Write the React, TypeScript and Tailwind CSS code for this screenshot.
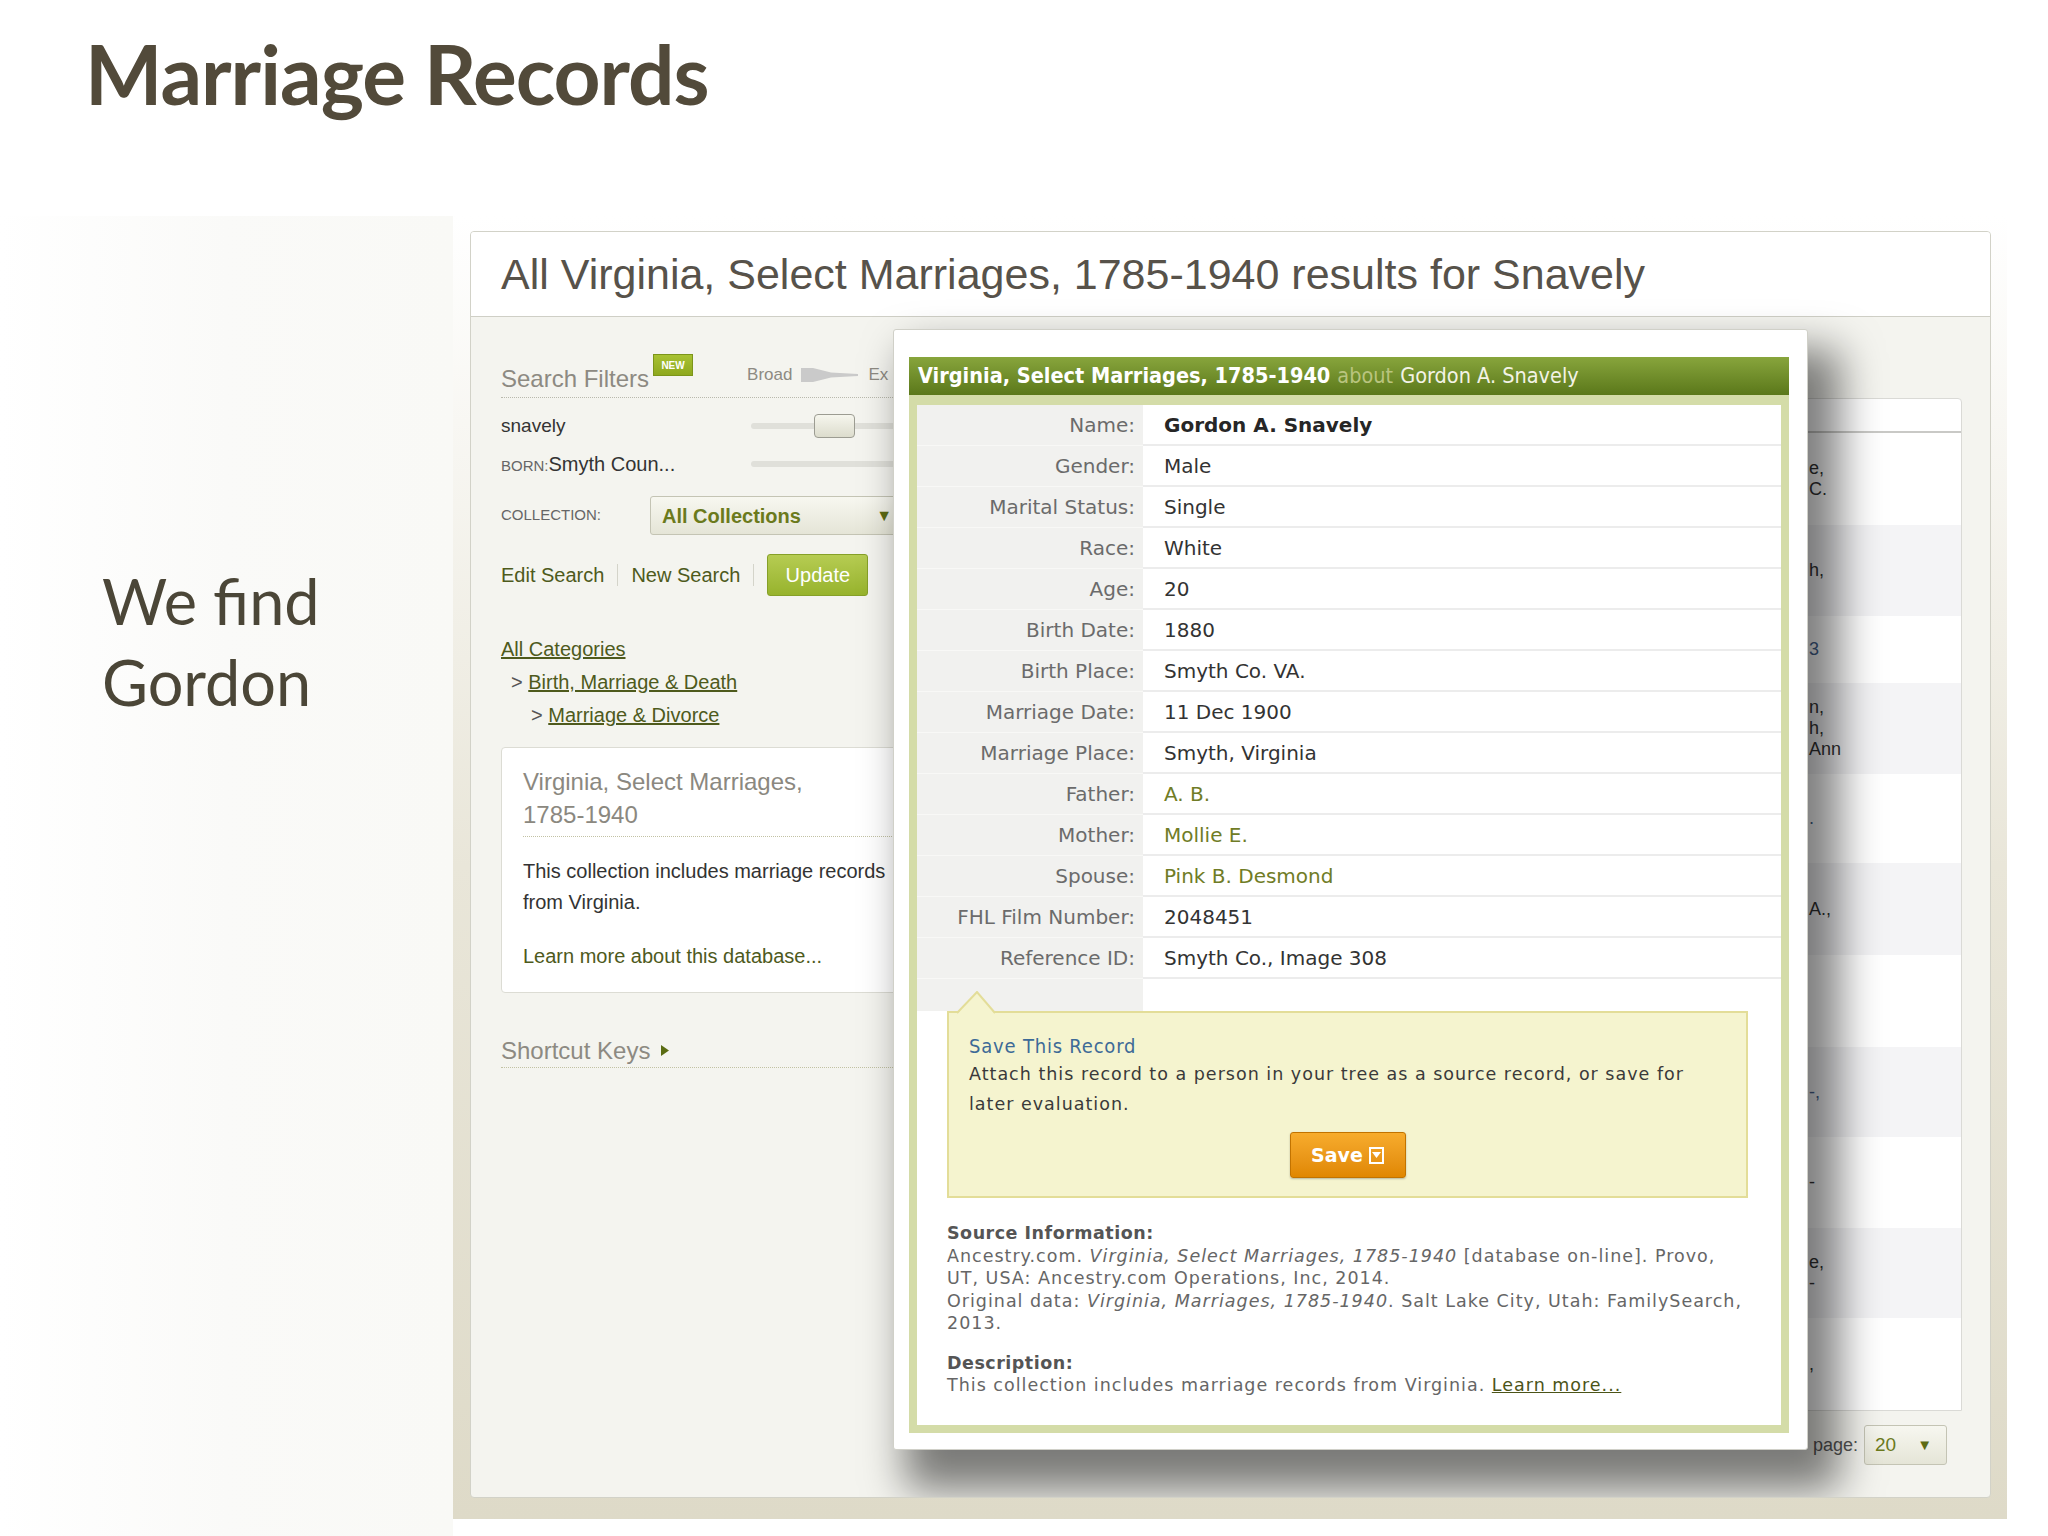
import React from 'react';

const arial = "font-['Liberation_Sans',Arial,sans-serif]";
const verdana = "font-['DejaVu_Sans',Verdana,sans-serif]";

const recordRows: { label: string; value: string; kind?: 'bold' | 'link' }[] = [
    { label: 'Name:', value: 'Gordon A. Snavely', kind: 'bold' },
    { label: 'Gender:', value: 'Male' },
    { label: 'Marital Status:', value: 'Single' },
    { label: 'Race:', value: 'White' },
    { label: 'Age:', value: '20' },
    { label: 'Birth Date:', value: '1880' },
    { label: 'Birth Place:', value: 'Smyth Co. VA.' },
    { label: 'Marriage Date:', value: '11 Dec 1900' },
    { label: 'Marriage Place:', value: 'Smyth, Virginia' },
    { label: 'Father:', value: 'A. B.', kind: 'link' },
    { label: 'Mother:', value: 'Mollie E.', kind: 'link' },
    { label: 'Spouse:', value: 'Pink B. Desmond', kind: 'link' },
    { label: 'FHL Film Number:', value: '2048451' },
    { label: 'Reference ID:', value: 'Smyth Co., Image 308' },
];

// result rows peeking out to the right of the popup
const resultRows: { h: string; lines: string[]; blue?: boolean }[] = [
    { h: 'h-[92px]', lines: ['e,', 'C.'] },
    { h: 'h-[91px]', lines: ['h,'] },
    { h: 'h-[67px]', lines: ['3'], blue: true },
    { h: 'h-[91px]', lines: ['n,', 'h,', 'Ann'] },
    { h: 'h-[89px]', lines: ['.'], blue: true },
    { h: 'h-[92px]', lines: ['A.,'] },
    { h: 'h-[92px]', lines: [] },
    { h: 'h-[90px]', lines: ['-,'], blue: true },
    { h: 'h-[91px]', lines: ['-'] },
    { h: 'h-[90px]', lines: ['e,', '-'] },
    { h: 'h-[92px]', lines: [','] },
];

const RecordPopup: React.FC = () => (
    <div className={`absolute left-[422px] top-[12px] w-[915px] h-[1121px] bg-white rounded-[3px] border border-[#d0d0c8] pt-[27px] pl-[15px] pr-[18px] pb-[16px] shadow-[22px_30px_42px_10px_rgba(0,0,0,0.5)] ${verdana}`}>
        <div className="h-full bg-[#d4dca8] px-[8px] pb-[8px] flex flex-col">
            {/* green title bar */}
            <div className="-mx-[8px] h-[38px] bg-gradient-to-b from-[#88a53c] to-[#5b781a] flex items-center pl-[9px] font-['DejaVu_Sans_Condensed','DejaVu_Sans',sans-serif] text-[21.5px] text-white whitespace-nowrap">
                <span className="font-bold">Virginia, Select Marriages, 1785-1940</span>
                <span className="ml-[7px] text-[#b9c47f]">about</span>
                <span className="ml-[7px] text-[#f3f3e6]">Gordon A. Snavely</span>
            </div>
            <div className="mt-[10px] flex-1 bg-white flex flex-col">
                {recordRows.map((r) => (
                    <div key={r.label} className="flex h-[41px] text-[20px]">
                        <div className="w-[226px] shrink-0 bg-[#f1f1ef] border-b border-[#f8f8f6] flex items-center justify-end pr-[8px] text-[#6b6b6b]">
                            {r.label}
                        </div>
                        <div
                            className={`flex-1 border-b-2 border-[#ececec] flex items-center pl-[21px] ${
                                r.kind === 'bold' ? 'font-bold text-[#262626]' : r.kind === 'link' ? 'text-[#707c26]' : 'text-[#333333]'
                            }`}
                        >
                            {r.value}
                        </div>
                    </div>
                ))}
                <div className="flex h-[32px]">
                    <div className="w-[226px] bg-[#f1f1ef]" />
                    <div className="flex-1" />
                </div>

                {/* save panel */}
                <div className="relative ml-[30px] mr-[33px] h-[187px] bg-[#f5f4cf] border-2 border-[#e3dd98] pt-[20px] px-[20px]">
                    <svg className="absolute -top-[22px] left-[8px]" width="44" height="24" viewBox="0 0 44 24">
                        <polygon points="0,23 20,2 38,23" fill="#f5f4cf" />
                        <polyline points="0,22 20,1 38,22" fill="none" stroke="#e3dd98" strokeWidth="2" />
                    </svg>
                    <div className="font-['DejaVu_Sans_Condensed','DejaVu_Sans',sans-serif] text-[20px] leading-[26px] tracking-[0.8px] text-[#3d6a97]">Save This Record</div>
                    <div className="text-[17.5px] leading-[30px] tracking-[1px] text-[#3a3a3a] whitespace-nowrap">
                        Attach this record to a person in your tree as a source record, or save for
                        <br />
                        later evaluation.
                    </div>
                    <div className="mt-[13px] flex justify-center">
                        <button className="h-[46px] w-[116px] rounded-[3px] border border-[#c27300] bg-gradient-to-b from-[#f7ac2c] to-[#e08700] shadow-[0_1px_2px_rgba(0,0,0,0.25)] flex items-center justify-center gap-[6px] text-white font-bold text-[19px]">
                            Save
                            <span className="w-[15px] h-[17px] border-2 border-white flex items-center justify-center">
                                <svg width="9" height="6" viewBox="0 0 9 6">
                                    <polygon points="0,0 9,0 4.5,6" fill="#ffffff" />
                                </svg>
                            </span>
                        </button>
                    </div>
                </div>

                {/* source information */}
                <div className="mt-[24px] pl-[30px] text-[17.5px] leading-[22.5px] tracking-[1px] text-[#666666] whitespace-nowrap">
                    <div className="font-bold text-[#555555] tracking-[0.5px]">Source Information:</div>
                    <div>
                        Ancestry.com. <i>Virginia, Select Marriages, 1785-1940</i> [database on-line]. Provo,
                    </div>
                    <div>UT, USA: Ancestry.com Operations, Inc, 2014.</div>
                    <div>
                        Original data: <i>Virginia, Marriages, 1785-1940</i>. Salt Lake City, Utah: FamilySearch,
                    </div>
                    <div>2013.</div>
                    <div className="mt-[17px] font-bold text-[#555555] tracking-[0.5px]">Description:</div>
                    <div>
                        This collection includes marriage records from Virginia.{' '}
                        <span className="underline text-[#4b5418]">Learn more...</span>
                    </div>
                </div>
            </div>
        </div>
    </div>
);

const Sidebar: React.FC = () => (
    <div className={`w-[440px] shrink-0 pl-[30px] ${arial}`}>
        {/* filters header */}
        <div className="mt-[37px] h-[44px] border-b border-dotted border-[#b9b9ad] flex">
            <div className="self-end pb-[6px] text-[24px] leading-none text-[#8d8a82]">Search Filters</div>
            <div className="ml-[4px] h-[22px] w-[40px] bg-gradient-to-b from-[#a8c232] to-[#8ea81e] border border-[#7c951a] flex items-center justify-center text-[10px] font-bold text-white">
                NEW
            </div>
            <div className="ml-[54px] mt-[11px] h-[20px] flex items-center text-[17px] text-[#8d8a82]">
                Broad
                <svg className="ml-[9px]" width="57" height="14" viewBox="0 0 57 14">
                    <polygon points="0,0 12,0 30,4.5 57,6 57,8 30,9.5 12,14 0,14" fill="#cacaca" />
                </svg>
                <span className="ml-[10px]">Ex</span>
            </div>
        </div>

        <div className="mt-[9px] h-[38px] grid grid-cols-[250px_1fr] items-center">
            <div className="text-[19px] text-[#333333]">snavely</div>
            <div className="relative h-[24px] flex items-center">
                <div className="h-[6px] w-full rounded-full bg-[#e0e0da]" />
                <div className="absolute left-[63px] top-0 h-[24px] w-[41px] rounded-[4px] border border-[#9c9c92] bg-gradient-to-b from-[#f6f6ee] to-[#dcdccd]" />
            </div>
        </div>
        <div className="h-[38px] grid grid-cols-[250px_1fr] items-center">
            <div className="text-[20px] text-[#333333] whitespace-nowrap">
                <span className="text-[15px] text-[#666666]">BORN:</span>Smyth Coun...
            </div>
            <div className="h-[6px] w-full rounded-full bg-[#e0e0da]" />
        </div>

        <div className="mt-[13px] h-[39px] grid grid-cols-[149px_1fr] items-center">
            <div className="text-[15px] text-[#666666]">COLLECTION:</div>
            <div className="h-[39px] rounded-[3px] border border-[#c4c4b4] bg-gradient-to-b from-[#f7f7f0] to-[#e5e5d7] flex items-center pl-[11px] pr-[18px]">
                <span className="font-bold text-[20px] text-[#6b7a1c]">All Collections</span>
                <span className="ml-auto text-[16px] text-[#5d6b14]">▼</span>
            </div>
        </div>

        <div className="mt-[19px] h-[42px] flex items-center text-[20px] text-[#4e5a1c]">
            <span>Edit Search</span>
            <span className="mx-[13px] h-[22px] w-px bg-[#d4d4ca]" />
            <span>New Search</span>
            <span className="mx-[13px] h-[22px] w-px bg-[#d4d4ca]" />
            <button className="h-[42px] w-[101px] rounded-[3px] border border-[#86a028] bg-gradient-to-b from-[#b6cc52] to-[#97b32c] text-white text-[20px]">
                Update
            </button>
        </div>

        <div className="mt-[37px] text-[20px] leading-[33px] text-[#4e5a1c]">
            <div>
                <span className="underline">All Categories</span>
            </div>
            <div className="pl-[10px]">
                <span className="text-[#555555]">&gt; </span>
                <span className="underline">Birth, Marriage &amp; Death</span>
            </div>
            <div className="pl-[30px]">
                <span className="text-[#555555]">&gt; </span>
                <span className="underline">Marriage &amp; Divorce</span>
            </div>
        </div>

        <div className="mt-[15px] w-[420px] h-[246px] rounded-[4px] border border-[#dcdcd4] bg-white pl-[21px] pt-[17px]">
            <div className="pb-[5px] border-b border-dotted border-[#c2c2a4] text-[24px] leading-[33px] text-[#8b8880]">
                Virginia, Select Marriages,
                <br />
                1785-1940
            </div>
            <div className="mt-[19px] text-[20px] leading-[31px] text-[#333333]">
                This collection includes marriage records
                <br />
                from Virginia.
            </div>
            <div className="mt-[23px] text-[20px] leading-[31px] text-[#4e5a1c]">Learn more about this database...</div>
        </div>

        <div className="mt-[41px] h-[34px] border-b border-dotted border-[#c2c2a4] flex items-center text-[24px] text-[#8d8a82]">
            Shortcut Keys
            <svg className="ml-[11px]" width="8" height="11" viewBox="0 0 8 11">
                <polygon points="0,0 8,5.5 0,11" fill="#5a6c12" />
            </svg>
        </div>
    </div>
);

const Results: React.FC = () => (
    <div className={`flex-1 pt-[81px] pl-[20px] pr-[28px] ${arial}`}>
        <div className="rounded-t-[4px] border border-[#dadad6] bg-white overflow-hidden">
            <div className="h-[34px] border-b-2 border-[#c9c9c6]" />
            {resultRows.map((row, i) => (
                <div key={i} className={`${row.h} flex flex-col justify-center pl-[877px] text-[18px] leading-[21px] ${i % 2 === 1 ? 'bg-[#f4f4f6]' : 'bg-white'} ${row.blue ? 'text-[#45638f]' : 'text-[#333333]'}`}>
                    {row.lines.map((l, j) => (
                        <span key={j}>{l}</span>
                    ))}
                </div>
            ))}
        </div>
        <div className="mt-[14px] flex items-center justify-end pr-[15px] gap-[6px]">
            <span className="text-[18px] text-[#555555]">page:</span>
            <div className="h-[40px] w-[83px] rounded-[3px] border border-[#c4c4b4] bg-gradient-to-b from-[#f7f7f0] to-[#e5e5d7] flex items-center pl-[10px] pr-[14px]">
                <span className="text-[19px] text-[#6b7a1c]">20</span>
                <span className="ml-auto text-[15px] text-[#5d6b14]">▼</span>
            </div>
        </div>
    </div>
);

const App: React.FC = () => {
    return (
        <div className="w-[2048px] h-[1536px] overflow-hidden bg-white">
            <div className="h-[216px] pl-[85px] pt-[32px]">
                <h1 className="font-['Lato',sans-serif] font-bold text-[82px] leading-none tracking-[-1px] text-[#524a3a]">Marriage Records</h1>
            </div>

            <div className="flex">
                {/* slide caption */}
                <div className="w-[453px] h-[1320px] pl-[102px] pt-[344px] bg-gradient-to-r from-white via-[#fafaf8] to-[#f9f9f6]">
                    <p className="font-['Lato',sans-serif] text-[63px] leading-[81px] text-[#4b4637]">
                        We find
                        <br />
                        Gordon
                    </p>
                </div>

                {/* screenshot frame */}
                <div className="w-[1554px] h-[1303px] pt-[15px] pl-[17px] pr-[16px] pb-[21px] bg-gradient-to-b from-white via-[#e9e6d9] to-[#dedac8]">
                    <div className="h-full flex flex-col rounded-[4px] border border-[#d2d2c8] bg-[#f4f4ef] overflow-hidden">
                        <div className={`h-[85px] shrink-0 bg-white border-b border-[#cfcfc6] flex items-center pl-[30px] text-[43px] text-[#57524a] ${arial}`}>
                            All Virginia, Select Marriages, 1785-1940 results for Snavely
                        </div>
                        <div className="relative flex-1 flex">
                            <Sidebar />
                            <Results />
                            <RecordPopup />
                        </div>
                    </div>
                </div>
            </div>
        </div>
    );
};

export default App;
